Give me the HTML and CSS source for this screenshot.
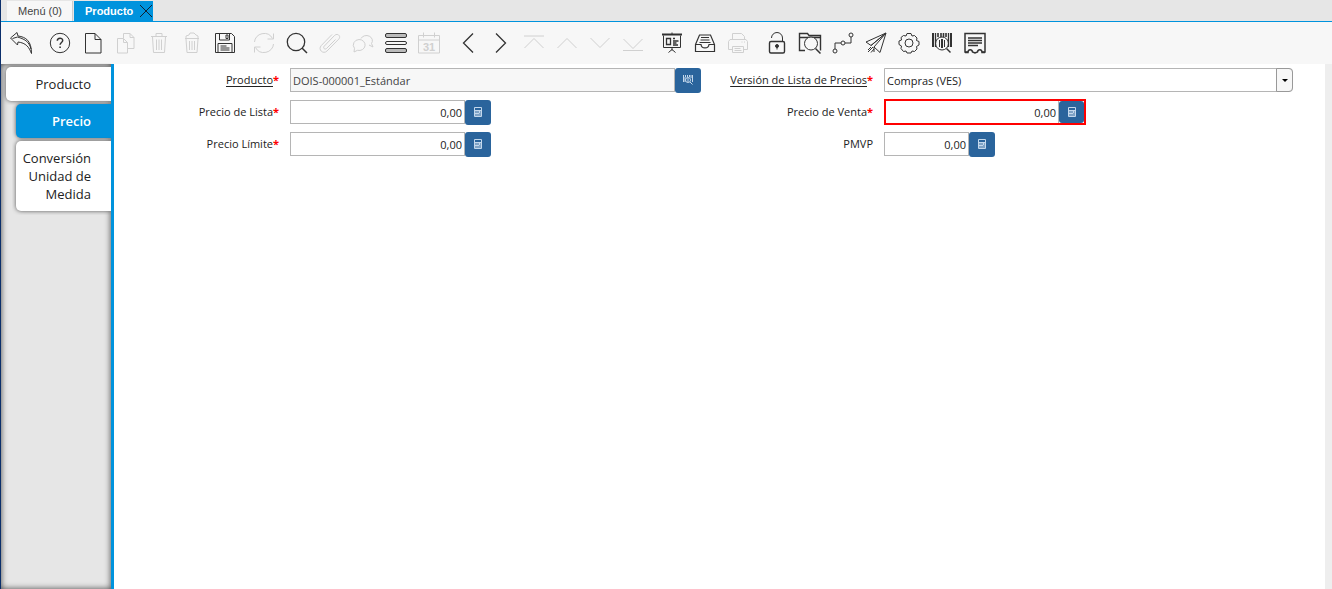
FILE: index.html
```html
<!DOCTYPE html>
<html lang="es">
<head>
    <meta charset="UTF-8">
    <meta name="viewport" content="width=device-width, initial-scale=1.0">
    <title>Producto</title>
    <link rel="stylesheet" href="styles.css">
</head>
<body>
    <nav class="window-tabs">
        <button class="window-tab">Menú (0)</button>
        <button class="window-tab active">Producto
            <svg class="close" viewBox="0 0 14 14"><path d="M1 1l12 12M13 1L1 13"/></svg>
        </button>
    </nav>

    <header class="toolbar">
        <div class="group">
            <button aria-label="Deshacer"><svg viewBox="0 0 24 24"><path d="M1.500 7L8 1.500l1 3.500C17 6 22.500 10 22.500 22.500 20 16 17 12 9 11l-.5 3zM3.500 7.500l5-1.500C15 8 20 10 22 18"/></svg></button>
        </div>
        <div class="group">
            <button aria-label="Ayuda"><svg viewBox="0 0 24 24"><circle cx="12" cy="12" r="9.700"/><path d="M9.300 9.800c0-3.500 5.400-3.400 5.400-.3 0 2-2.600 2-2.600 4.300" stroke-width="1.500"/><path d="M12.100 15.500v1.500" stroke-width="1.600"/></svg></button>
            <button aria-label="Nuevo"><svg viewBox="0 0 24 24"><path d="M4.500 2.500h9.500l6 6v13.500H4.500zM14 2.500v6h6"/></svg></button>
            <button aria-label="Copiar" disabled><svg viewBox="0 0 24 24"><path d="M3.500 7.500h6l4 4v10.500h-10zM9.500 7.500v4h4M9.500 7V2.500h6.500l4 4v11H14M16 2.500v4h4"/></svg></button>
            <button aria-label="Borrar" disabled><svg viewBox="0 0 24 24"><path d="M4 5.500h16M9 5V2.500h6V5M5.500 6l1 15.500h11l1-15.500M9.500 8.500v10.500M12 8.500v10.500M14.500 8.500v10.500"/></svg></button>
            <button aria-label="Borrar selección" disabled><svg viewBox="0 0 24 24"><path d="M5 7.500h14M6 7V5l3-1 1-2h4l2 2 2 1v2M6 8l1 13.500h10L18 8M9.500 10v9M12 10v9M14.500 10v9"/></svg></button>
            <button aria-label="Guardar"><svg viewBox="0 0 24 24"><path d="M2.500 2.500h16l3 3v16h-19zM6.500 2.500v6.500h10V2.500M13 4h2v3.500h-2zM5 21.500v-9h14v9M7.500 15h6M7.500 17h9M7.500 19h9"/></svg></button>
        </div>
        <div class="group">
            <button aria-label="Refrescar" disabled><svg viewBox="0 0 24 24"><path d="M2.500 11A9.500 9 0 0 1 20.500 7.500M21.500 2.500v5.500h-6M21.500 13A9.500 9 0 0 1 3.500 16.500M2.500 21.500V16h6"/></svg></button>
            <button aria-label="Buscar"><svg viewBox="0 0 24 24"><circle cx="11" cy="11" r="8.700" stroke-width="1.300"/><path d="M17 17l5 5" stroke-width="1.500"/></svg></button>
            <button aria-label="Adjunto" disabled><svg viewBox="0 0 24 24"><path d="M17.500 8.500l-9 9c-1.500 1.500-4-.5-2.300-2.300L16.500 4.500c3-3 7 .8 4.200 3.700L9 20c-3.800 3.800-9.500-1.500-5.700-5.500L14 3.500"/></svg></button>
            <button aria-label="Chat" disabled><svg viewBox="0 0 24 24"><path d="M10 7.500a6 5.200 0 1 1 10.500 5l1.500 3.500-4-2M8 8.500a6 5.500 0 1 1-1.500 10.800L3 21l.5-3.700A6 5.500 0 0 1 8 8.500"/></svg></button>
            <button aria-label="Cuadrícula"><svg viewBox="0 0 24 24"><rect x="1.500" y="2.500" width="21" height="4" rx="1.500" fill="#bbb"/><rect x="1.500" y="10.500" width="21" height="3" rx="1.500"/><rect x="1.500" y="17.500" width="21" height="4" rx="1.500" fill="#bbb"/></svg></button>
            <button aria-label="Calendario" disabled><svg viewBox="0 0 24 24"><path d="M1.500 4.500h21v17.500h-21zM1.500 9h21M6.500 1.500v5M17.500 1.500v5"/><text x="12" y="19.500">31</text></svg></button>
        </div>
        <div class="group">
            <button aria-label="Anterior"><svg viewBox="0 0 24 24"><path d="M17 2.500L7.500 12l9.500 9.500" stroke-width="1.300"/></svg></button>
            <button aria-label="Siguiente"><svg viewBox="0 0 24 24"><path d="M7 2.500l9.500 9.500L7 21.500" stroke-width="1.300"/></svg></button>
            <button aria-label="Primer registro" disabled><svg viewBox="0 0 24 24"><path d="M2 5h20M2.500 17L12 7.500l9.500 9.500"/></svg></button>
            <button aria-label="Registro anterior" disabled><svg viewBox="0 0 24 24"><path d="M2.500 17L12 7.500l9.500 9.500"/></svg></button>
            <button aria-label="Registro siguiente" disabled><svg viewBox="0 0 24 24"><path d="M2.500 7l9.500 9.500L21.500 7"/></svg></button>
            <button aria-label="Último registro" disabled><svg viewBox="0 0 24 24"><path d="M2.500 8l9.500 9.500L21.500 8M2 19.500h20"/></svg></button>
        </div>
        <div class="group">
            <button aria-label="Reporte"><svg viewBox="0 0 24 24"><path d="M2 3.500h20" stroke-width="2"/><path d="M3.500 4.500v12h17v-12M12 1.500v2M12 16.500v3M12 18.500l-3.500 3M12 18.500l3.500 3"/><path d="M6.500 7.500h4v6h-4zM13 7.500h2M13 10h5.500M13 12h3.500M13 14h5" stroke-width="1.300"/></svg></button>
            <button aria-label="Archivo"><svg viewBox="0 0 24 24"><path d="M2.500 13.500L6.500 4h11l4 9.500v7h-19zM2.500 13.500h5.500c.5 4.500 7.500 4.500 8 0h5.500M8 6.500h8M7.500 9h9M6.500 11.500h11" stroke-width="1.200"/></svg></button>
            <button aria-label="Imprimir" disabled><svg viewBox="0 0 24 24"><path d="M6.500 8.500v-6h9l3 3v3M6 18.500H2.500v-8l1.500-2h16l1.500 2v8H18M6.500 15.500h11v6h-11zM8.500 17.500h6M8.500 19.500h7M15.500 11h1M18 11h1"/></svg></button>
        </div>
        <div class="group">
            <button aria-label="Bloquear"><svg viewBox="0 0 24 24"><rect x="4.500" y="10.500" width="15" height="11.500" rx="1.500" stroke-width="1.400"/><path d="M6.500 7a5.500 5.500 0 0 1 11 0v3.500"/><circle cx="12" cy="15" r="1.500" fill="#333"/><path d="M12 15v3.500"/></svg></button>
            <button aria-label="Zoom"><svg viewBox="0 0 24 24"><path d="M7 19.500H1.500v-17h8l1.500 2h11.500v15M1.500 6.500h21" stroke-width="1.400"/><circle cx="13" cy="12.500" r="6.500" fill="#f7f7f7"/><path d="M17.500 17.500l5 5" stroke-width="1.500"/></svg></button>
            <button aria-label="Flujo de trabajo"><svg viewBox="0 0 24 24"><circle cx="4" cy="20" r="2"/><circle cx="12" cy="12" r="2"/><circle cx="20" cy="4" r="2"/><path d="M4 18v-6h6M14 12h6V6"/></svg></button>
            <button aria-label="Enviar"><svg viewBox="0 0 24 24"><path d="M22 2L2 11l5 3.500zM22 2L10 16l6 5.500zM22 2L7 14.500M10 16v5M9 16l-5 5M7 16l-3 3M10 18l-3 3.500"/></svg></button>
            <button aria-label="Proceso"><svg viewBox="0 0 24 24"><circle cx="12" cy="12" r="4"/><path d="M10 2.500h4l1 2.500 2.500-.5 2.500 2.500-.5 2.500 2.500 1v3.500l-2.500 1.500.5 2.500-2.500 2.500-2.500-.5-1 2h-4l-1-2-2.500.5L4 17.500l.5-2.500L2 13.500V10l2.500-1L4 6.500 6.500 4.500l2.500.5z"/></svg></button>
            <button aria-label="Información de producto"><svg viewBox="0 0 24 24"><path d="M3 2v14M21 2v14" stroke-width="2"/><path d="M5.500 2v14M18.500 2v14" stroke-width="1.300"/><path d="M8 2v4M11 2v4M13.500 2v4M16 2v4" stroke-width="1.600"/><circle cx="12" cy="12.500" r="6.500"/><path d="M9.500 9v7M14.500 9v7"/><path d="M12 8v9" stroke-width="2"/><path d="M16.500 17.500l4 4" stroke-width="1.500"/></svg></button>
            <button aria-label="Recibo"><svg viewBox="0 0 24 24"><path d="M5 21H2V2.500h20V21h-3" stroke-width="1.500"/><path d="M5 7h14M5 9.500h14M5 12h14M5 14.500h10" stroke-width="1.300"/><path d="M2 21.500h3c0-3.500 4-3.500 4.500-.5l2.500 1 2.500-1c.5-3 4.500-3 4.500.5h3" stroke-width="1.500"/></svg></button>
        </div>
    </header>

    <div class="workspace">
        <aside class="side-tabs">
            <button class="side-tab parent">Producto</button>
            <button class="side-tab active">Precio</button>
            <button class="side-tab">Conversión Unidad de Medida</button>
        </aside>

        <main>
            <form class="fields">
                <label for="product"><a href="#product">Producto</a><b>*</b></label>
                <div class="field">
                    <input type="text" id="product" value="DOIS-000001_Estándar" readonly>
                    <button type="button" class="field-btn" aria-label="Buscar producto"><svg viewBox="0 0 12 12"><path d="M1.500 1v7M3.500 1v2M5.500 1v2M7.500 1v2M10.500 1v7M9 1v3M3 3v5"/><circle cx="6" cy="6" r="2.500"/><path d="M6 4v4M8 8l2.500 2.500"/></svg></button>
                </div>
                <label for="version"><a href="#version">Versión de Lista de Precios</a><b>*</b></label>
                <div class="combo">
                    <select id="version">
                        <option>Compras (VES)</option>
                    </select>
                    <span class="arrow"></span>
                </div>

                <label for="listPrice">Precio de Lista<b>*</b></label>
                <div class="field number">
                    <input type="text" id="listPrice" value="0,00">
                    <button type="button" class="field-btn" aria-label="Calculadora"><svg viewBox="0 0 12 12"><path d="M2.500 1.500h7v9h-7zM2.500 4.500h7"/><path d="M3 5h6v5H3z" fill="#7fa3c6" stroke="none"/><path d="M3 7.500h4M7.500 5v2"/></svg></button>
                </div>
                <label for="salePrice">Precio de Venta<b>*</b></label>
                <div class="field number focused">
                    <input type="text" id="salePrice" value="0,00">
                    <button type="button" class="field-btn" aria-label="Calculadora"><svg viewBox="0 0 12 12"><path d="M2.500 1.500h7v9h-7zM2.500 4.500h7"/><path d="M3 5h6v5H3z" fill="#7fa3c6" stroke="none"/><path d="M3 7.500h4M7.500 5v2"/></svg></button>
                </div>

                <label for="limitPrice">Precio Límite<b>*</b></label>
                <div class="field number">
                    <input type="text" id="limitPrice" value="0,00">
                    <button type="button" class="field-btn" aria-label="Calculadora"><svg viewBox="0 0 12 12"><path d="M2.500 1.500h7v9h-7zM2.500 4.500h7"/><path d="M3 5h6v5H3z" fill="#7fa3c6" stroke="none"/><path d="M3 7.500h4M7.500 5v2"/></svg></button>
                </div>
                <label for="pmvp">PMVP</label>
                <div class="field number short">
                    <input type="text" id="pmvp" value="0,00">
                    <button type="button" class="field-btn" aria-label="Calculadora"><svg viewBox="0 0 12 12"><path d="M2.500 1.500h7v9h-7zM2.500 4.500h7"/><path d="M3 5h6v5H3z" fill="#7fa3c6" stroke="none"/><path d="M3 7.500h4M7.500 5v2"/></svg></button>
                </div>
            </form>
        </main>
    </div>
</body>
</html>
```

FILE: styles.css
```css
* {
    box-sizing: border-box;
}
body {
    margin: 0;
    min-height: 100vh;
    display: flex;
    flex-direction: column;
    border-left: 1px solid #0b2f6b;
    font-family: "Open Sans", "Noto Sans", sans-serif;
    font-size: 11px;
    color: #222;
    background: #fff;
}
button {
    margin: 0;
    padding: 0;
    border: none;
    background: none;
    font: inherit;
    color: inherit;
    cursor: pointer;
}
svg {
    display: block;
    fill: none;
    stroke: currentColor;
}

/* window tabs */
.window-tabs {
    display: flex;
    gap: 1px;
    height: 22px;
    padding: 1px 0 0 6px;
    background: #e6e6e6;
    border-bottom: 1px solid #0093dd;
}
.window-tab {
    display: flex;
    align-items: center;
    padding: 0 10px 0 11px;
    font-family: "Liberation Sans", Arial, sans-serif;
    color: #444;
    background: #f7f7f7;
    border-right: 1px solid #ccc;
}
.window-tab.active {
    gap: 6px;
    padding-right: 0;
    font-weight: bold;
    color: #fff;
    background: #0093dd;
    border-right: none;
}
.close {
    width: 14px;
    height: 14px;
    color: #123;
}

/* toolbar */
.toolbar {
    display: flex;
    align-items: center;
    gap: 15px;
    height: 42px;
    padding-left: 8px;
    background: #f7f7f7;
}
.group {
    display: flex;
    gap: 9px;
}
.toolbar button {
    width: 24px;
    height: 24px;
    color: #333;
}
.toolbar button:disabled {
    color: #d0d0d0;
    cursor: default;
}
.toolbar text {
    font-family: "Liberation Sans", Arial, sans-serif;
    font-size: 11px;
    font-weight: bold;
    text-anchor: middle;
    fill: currentColor;
    stroke: none;
}

/* side tabs */
.workspace {
    flex: 1;
    display: flex;
}
.side-tabs {
    flex: none;
    width: 113px;
    padding-top: 3px;
    display: flex;
    flex-direction: column;
    gap: 3px;
    background: #e6e6e6;
    border-right: 3px solid #0093dd;
    box-shadow: inset 0 0 6px #444;
}
.side-tab {
    margin-left: 15px;
    padding: 8px 20px 8px 6px;
    font-size: 13px;
    line-height: 18px;
    text-align: right;
    background: #fff;
    border-radius: 5px 0 0 5px;
    box-shadow: 0 0 4px #555;
    clip-path: inset(-4px 0 -4px -4px);
}
.side-tab.parent {
    margin-left: 5px;
}
.side-tab.active {
    font-weight: 600;
    color: #fff;
    background: #0093dd;
}

/* form */
main {
    flex: 1;
    border-right: 7px solid #eee;
}
.fields {
    display: grid;
    grid-template-columns: 165fr 411fr 161fr 409fr;
    grid-auto-rows: 32px;
    column-gap: 11px;
    padding-right: 32px;
    align-items: center;
}
.fields label {
    padding-bottom: 1px;
    text-align: right;
}
.fields label a {
    color: inherit;
    text-underline-offset: 2px;
}
.fields label b {
    color: #f00;
}
.field {
    display: flex;
    align-items: center;
}
.field input {
    flex: 1;
    min-width: 0;
    height: 24px;
    padding: 1px 2px 0;
    border: 1px solid #b5b5b5;
    font: inherit;
    color: #222;
    background: #fff;
}
.field input:read-only {
    color: #444;
    background: #f7f7f7;
}
.field.number {
    width: 201px;
}
.field.number input {
    text-align: right;
}
.field.short {
    width: 111px;
}
.field.focused {
    width: 202px;
    height: 26px;
    border: 2px solid #f00;
}
.field.focused input {
    height: 22px;
    border-width: 0 1px 0 0;
}
.field-btn {
    width: 26px;
    height: 25px;
    display: flex;
    align-items: center;
    justify-content: center;
    color: #c4d8ec;
    background: #2a649c;
    border-radius: 3px;
}
.field-btn svg {
    width: 12px;
    height: 12px;
}
.field.focused .field-btn {
    width: 25px;
    height: 22px;
}
.combo {
    position: relative;
}
.combo select {
    display: block;
    width: 100%;
    height: 24px;
    padding: 1px 20px 0 2px;
    appearance: none;
    border: 1px solid #b5b5b5;
    border-radius: 0 4px 4px 0;
    font: inherit;
    color: #222;
    background: #fff;
}
.arrow {
    position: absolute;
    top: 0;
    right: 0;
    width: 17px;
    height: 24px;
    display: flex;
    align-items: center;
    justify-content: center;
    border: 1px solid #999;
    border-radius: 0 4px 4px 0;
    background: #f7f7f7;
    pointer-events: none;
}
.arrow::after {
    content: "";
    border: 3px solid transparent;
    border-top-color: #000;
    border-bottom: none;
}
```
